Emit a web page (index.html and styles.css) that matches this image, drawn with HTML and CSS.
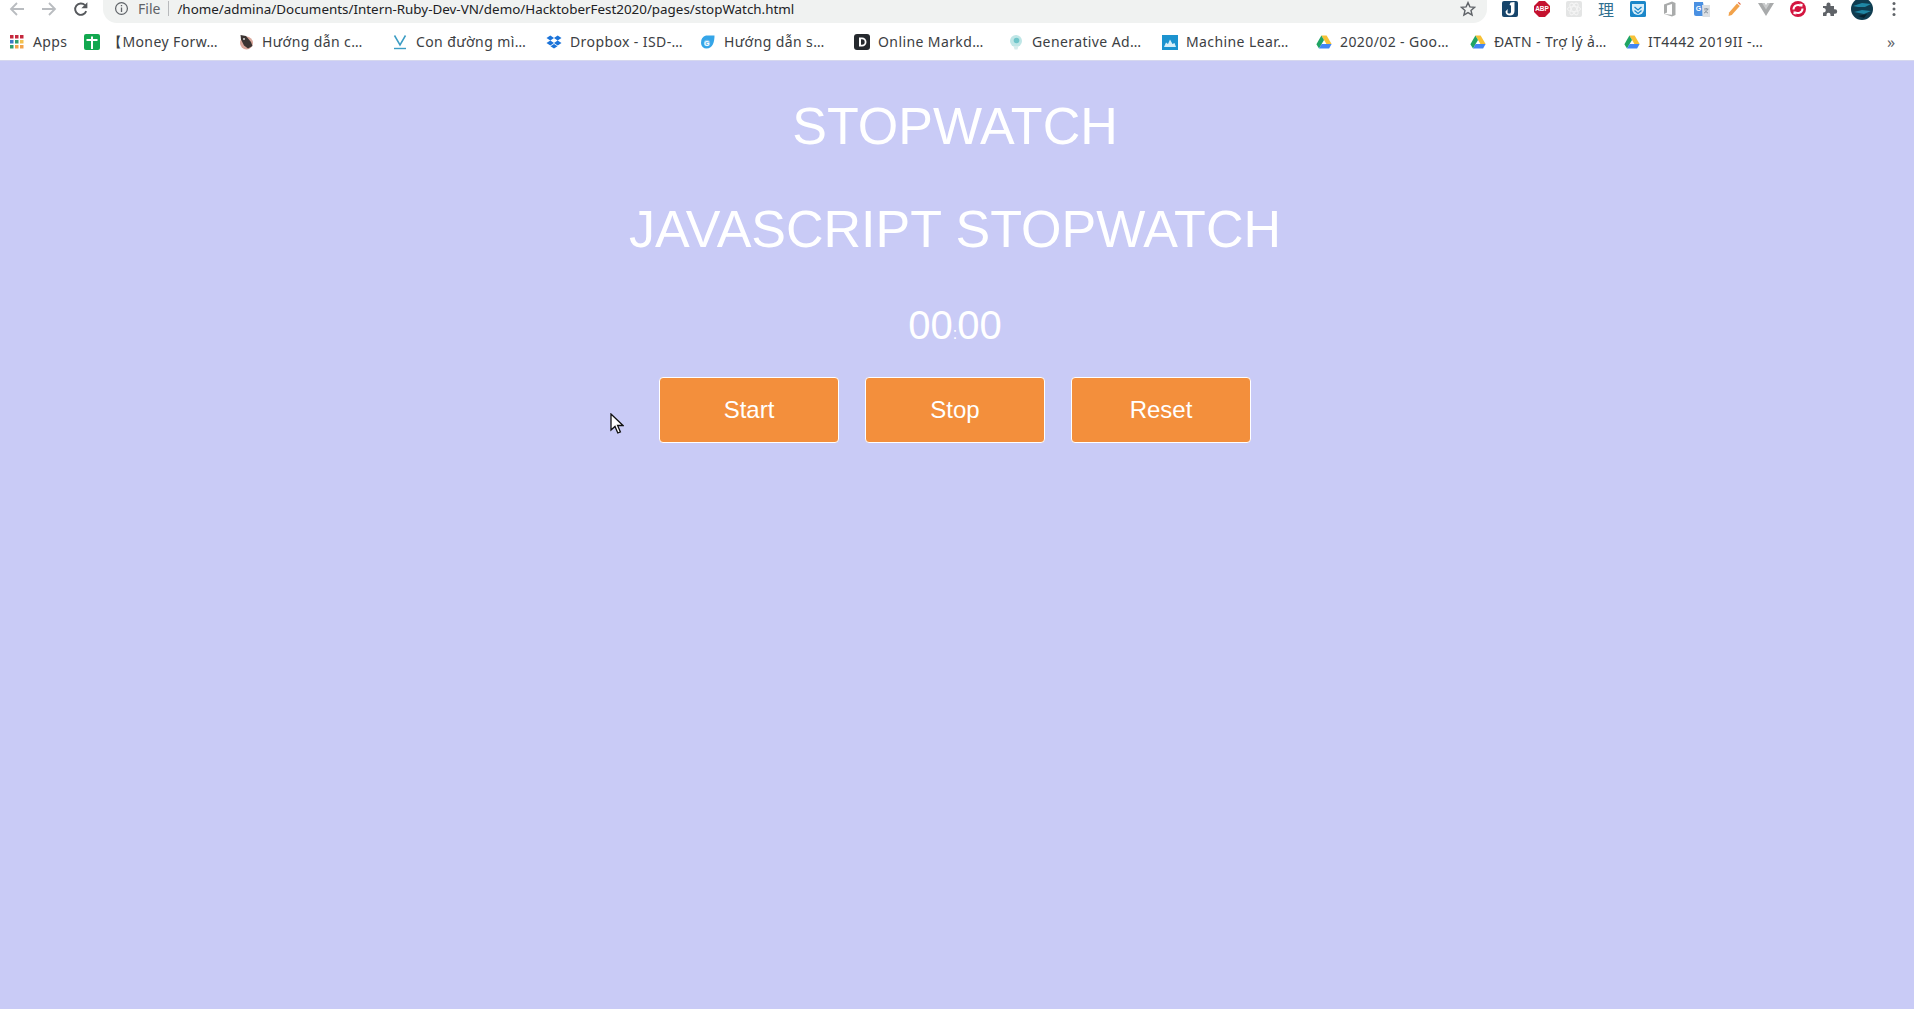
FILE: index.html
```html
<!DOCTYPE html>
<html lang="en">
<head>
  <meta charset="UTF-8" />
  <title>Stopwatch</title>
  <link rel="stylesheet" href="styles.css">
</head>
<body>
  <svg class="defs" width="0" height="0">
    <symbol id="drive" viewBox="0 0 16 16">
      <path d="M5.4 1.5h5.2l5 8.6h-5.2z" fill="#f7c136"/>
      <path d="M5.4 1.5L.4 10.2l2.6 4.4 5-8.7z" fill="#1fa463"/>
      <path d="M3 14.6h10.1l2.5-4.5H5.6z" fill="#4285f4"/>
    </symbol>
  </svg>

  <header class="browser">
    <div class="toolbar">
      <div class="nav">
        <svg class="nav-icon" viewBox="0 0 16 16"><path d="M15 8H2M8 2L2 8l6 6" fill="none" stroke="#b9bcc0" stroke-width="1.8"/></svg>
        <svg class="nav-icon" viewBox="0 0 16 16"><path d="M1 8h13M8 2l6 6-6 6" fill="none" stroke="#b9bcc0" stroke-width="1.8"/></svg>
        <svg class="nav-icon" viewBox="0 0 16 16"><path d="M13.2 10.2A5.7 5.7 0 1 1 12 4.2" fill="none" stroke="#55585c" stroke-width="1.9"/><path d="M14.4 1.2v6h-6z" fill="#55585c"/></svg>
      </div>
      <div class="address">
        <svg class="info" viewBox="0 0 16 16"><circle cx="8" cy="8" r="6.3" fill="none" stroke="#5f6368" stroke-width="1.3"/><path d="M7.3 7h1.4v4.6H7.3zM7.3 4.3h1.4v1.4H7.3z" fill="#5f6368"/></svg>
        <span class="scheme">File</span>
        <span class="divider"></span>
        <span class="url">/home/admina/Documents/Intern-Ruby-Dev-VN/demo/HacktoberFest2020/pages/stopWatch.html</span>
        <svg class="star" viewBox="0 0 16 16"><path d="M8 1.6l1.9 4.3 4.7.4-3.6 3.1 1.1 4.6L8 11.6l-4.1 2.4L5 9.4 1.4 6.3l4.7-.4z" fill="none" stroke="#5f6368" stroke-width="1.4"/></svg>
      </div>
      <div class="extensions">
        <svg class="ext" viewBox="0 0 16 16"><rect width="16" height="16" rx="2" fill="#17456b"/><path d="M8.500 1.500L12.500 1v9c0 3-2 4.500-4.500 4.500-2.500 0-4.500-1.500-4.500-4l2.200-2.500-.2 3.500c.5 1.500 3.500 1.500 3.500-.8V4.500L7.500 4z" fill="#fff"/></svg>
        <svg class="ext" viewBox="0 0 16 16"><path d="M5 0h6l5 5v6l-5 5H5l-5-5V5z" fill="#c4122f"/><text x="8" y="10.300" class="abp">ABP</text></svg>
        <svg class="ext" viewBox="0 0 16 16"><rect width="16" height="16" rx="2" fill="#e4e5e5"/><g fill="none" stroke="#f5f5f5" stroke-width="1"><ellipse cx="8" cy="8" rx="6.500" ry="2.600"/><ellipse cx="8" cy="8" rx="6.500" ry="2.600" transform="rotate(60 8 8)"/><ellipse cx="8" cy="8" rx="6.500" ry="2.600" transform="rotate(120 8 8)"/></g></svg>
        <span class="ext kanji">理</span>
        <svg class="ext" viewBox="0 0 16 16"><rect width="16" height="16" rx="1.500" fill="#1b87c9"/><path d="M2 3h12v5a6 6 0 0 1-12 0z" fill="#d8eef9"/><path d="M4.500 6L8 9l3.500-3M4.500 9.500L8 12.500l3.500-3" fill="none" stroke="#1b87c9" stroke-width="1.300"/></svg>
        <svg class="ext" viewBox="0 0 16 16"><path d="M2 3.500L10 .500l3.500 1.500v12L10 15.500l-8-2.500 8 .8V3L5 4.500v7L2 13z" fill="#a9abab"/></svg>
        <svg class="ext" viewBox="0 0 16 16"><path d="M0 1h9l2 14H2a2 2 0 0 1-2-2z" fill="#4a90e2"/><path d="M8 4h8v12H8.500z" fill="#dcdfe3"/><text x="4.500" y="9.500" class="gt">G</text><path d="M10 8h4.500M12.200 7v1M13.500 8c-.5 2-2 3.500-3.500 4M11 9.500c.5 1 1.800 2 3 2.500" fill="none" stroke="#7b8794" stroke-width=".9"/></svg>
        <svg class="ext" viewBox="0 0 16 16"><path d="M2.500 15l.6-3.600L11 2.500l2.800 2.500-8 8.900z" fill="#f2a24a"/><path d="M11.800 1.700l1-.7 2 1.900-.6 1.100z" fill="#e5683f"/></svg>
        <svg class="ext" viewBox="0 0 16 16"><path d="M0 2h5.200L8 6.500 10.800 2H16L8 15z" fill="#a8aaab"/><path d="M4 2h2.800L8 4.200 9.200 2H12L8 8.500z" fill="#c9cbcc"/></svg>
        <svg class="ext" viewBox="0 0 16 16"><circle cx="8" cy="8" r="8" fill="#d3153f"/><path d="M3.500 8.500a4.500 4.500 0 0 1 7.500-3.400M12.500 7.500a4.500 4.500 0 0 1-7.500 3.400" fill="none" stroke="#fff" stroke-width="2"/><path d="M9.500 2.500l3.200.5-.6 3.600zM6.500 13.500l-3.200-.5.600-3.600z" fill="#fff"/></svg>
        <svg class="ext" viewBox="0 0 16 16"><path d="M1 5h3.500V3.500a2 2 0 0 1 4 0V5H12v3.300h1a2.200 2.200 0 0 1 0 4.400h-1V15H8.500v-1.200a2 2 0 0 0-4 0V15H1v-3.500h1a2.300 2.300 0 0 0 0-4.500H1z" fill="#5f6368"/></svg>
        <svg class="avatar" viewBox="0 0 22 22"><circle cx="11" cy="11" r="11" fill="#0f3c50"/><path d="M2 8l9-3 9 1-6 3-7 0zM3 14l8-2 9 1-7 3z" fill="#1f87a5"/><path d="M7 18l9-2-3 4z" fill="#06202c"/></svg>
        <svg class="dots" viewBox="0 0 4 16"><circle cx="2" cy="2.500" r="1.500"/><circle cx="2" cy="8" r="1.500"/><circle cx="2" cy="13.500" r="1.500"/></svg>
      </div>
    </div>

    <nav class="bookmarks">
      <a class="apps">
        <svg class="fav" viewBox="0 0 16 16">
          <g fill="#c5283d"><rect x="1" y="1" width="3.500" height="3.500"/><rect x="6" y="1" width="3.500" height="3.500"/><rect x="11" y="1" width="3.500" height="3.500"/></g>
          <rect x="1" y="6" width="3.500" height="3.500" fill="#3a78c9"/><rect x="6" y="6" width="3.500" height="3.500" fill="#2f9e6e"/><rect x="11" y="6" width="3.500" height="3.500" fill="#f2c14e"/>
          <rect x="1" y="11" width="3.500" height="3.500" fill="#2f9e6e"/><rect x="6" y="11" width="3.500" height="3.500" fill="#f2a24a"/><rect x="11" y="11" width="3.500" height="3.500" fill="#f2a24a"/>
        </svg>
        <span>Apps</span>
      </a>
      <a class="mark">
        <svg class="fav" viewBox="0 0 16 16"><rect width="16" height="16" rx="2" fill="#12a84f"/><path d="M2.500 5h4.500V2.500h2V5h4.500v2H9v8H7V7H2.500z" fill="#fff"/></svg>
        <span>【Money Forw…</span>
      </a>
      <a class="mark">
        <svg class="fav" viewBox="0 0 16 16"><circle cx="8.500" cy="9" r="6.500" fill="#d9a79b"/><path d="M2.500 1l5.500 1 5 6 1.500 4-4.500 2.500-4-3-3-6z" fill="#3d3533"/><circle cx="6" cy="5" r="1" fill="#ddd"/></svg>
        <span>Hướng dẫn c…</span>
      </a>
      <a class="mark">
        <svg class="fav" viewBox="0 0 16 16"><path d="M2.500 1.500L8 11l5.500-9.500" fill="none" stroke="#3b9cc4" stroke-width="1.500"/><path d="M2 14.500h12" stroke="#3b9cc4" stroke-width="1.400"/></svg>
        <span>Con đường mì…</span>
      </a>
      <a class="mark">
        <svg class="fav" viewBox="0 0 16 16"><path d="M4.300 1.500L8 4 4.300 6.500.5 4zM11.700 1.500L15.500 4l-3.800 2.500L8 4zM4.300 6.500L8 9l-3.700 2.500L.5 9zM11.700 6.500L15.500 9l-3.800 2.500L8 9zM4.500 12.300L8 10l3.500 2.300L8 14.600z" fill="#1a73d9"/></svg>
        <span>Dropbox - ISD-…</span>
      </a>
      <a class="mark">
        <svg class="fav" viewBox="0 0 16 16"><path d="M6 1.500h8.500c0 6-1.500 13-8 13A5.500 5.500 0 0 1 1 9a7 7 0 0 1 5-7.500z" fill="#35a5e8"/><circle cx="7" cy="9" r="3.200" fill="#fff" opacity=".3"/><text x="7" y="11.500" class="gt">G</text></svg>
        <span>Hướng dẫn s…</span>
      </a>
      <a class="mark">
        <svg class="fav" viewBox="0 0 16 16"><rect width="16" height="16" rx="3" fill="#25292e"/><path d="M5 3.500h3a4.500 4.500 0 0 1 0 9H5zM7 5.300v5.400h1a2.700 2.700 0 0 0 0-5.400z" fill="#fff" fill-rule="evenodd"/></svg>
        <span>Online Markd…</span>
      </a>
      <a class="mark">
        <svg class="fav" viewBox="0 0 16 16"><circle cx="8" cy="7" r="6" fill="#bfe6e6"/><path d="M5.500 12h5l-1 3.500h-3z" fill="#d5ecec"/><circle cx="8.500" cy="6.500" r="2.800" fill="#6fc5c9"/></svg>
        <span>Generative Ad…</span>
      </a>
      <a class="mark">
        <svg class="fav" viewBox="0 0 16 16"><rect y="1" width="16" height="15" fill="#1c93cf"/><path d="M2 13h12l-1.500-4-2 1L8 5.500 6 10 4 8.500z" fill="#d7eff9"/></svg>
        <span>Machine Lear…</span>
      </a>
      <a class="mark"><svg class="fav"><use href="#drive"/></svg><span>2020/02 - Goo…</span></a>
      <a class="mark"><svg class="fav"><use href="#drive"/></svg><span>ĐATN - Trợ lý ả…</span></a>
      <a class="mark"><svg class="fav"><use href="#drive"/></svg><span>IT4442 2019II -…</span></a>
      <span class="more">»</span>
    </nav>
  </header>

  <main class="stopwatch">
    <h1>STOPWATCH</h1>
    <h1 class="sub">JAVASCRIPT STOPWATCH</h1>
    <p class="time"><span>00</span>:<span>00</span></p>
    <div class="buttons">
      <button>Start</button>
      <button>Stop</button>
      <button>Reset</button>
    </div>
  </main>

  <svg class="cursor" viewBox="0 0 14 22"><path d="M1 1v16l4-3.600 2.800 6.600 2.600-1.100-2.800-6.400H13z" fill="#fff" stroke="#111" stroke-width="1.300"/></svg>
</body>
</html>
```
FILE: styles.css
```css
* {
  box-sizing: border-box;
}

html, body {
  height: 100%;
}

body {
  margin: 0;
  display: flex;
  flex-direction: column;
  overflow: hidden;
  background-color: #c9cbf6;
  font-family: "Liberation Sans", Arial, sans-serif;
}

.defs {
  position: absolute;
}

/* browser chrome */
.browser {
  background-color: #fff;
  font-family: "Noto Sans", "Open Sans", sans-serif;
  color: #3c4043;
}

.toolbar {
  display: flex;
  height: 23px;
}

.nav {
  display: flex;
  align-items: center;
  gap: 16px;
  width: 103px;
  padding: 0 0 5px 9px;
}

.nav-icon {
  width: 16px;
  height: 16px;
}

.address {
  display: flex;
  align-items: center;
  width: 1384px;
  padding: 0 11px 6px 11px;
  background-color: #f0f2f1;
  border-radius: 0 0 14px 14px;
}

.info {
  width: 15px;
  height: 15px;
}

.scheme {
  margin-left: 9px;
  font-size: 14px;
  color: #5f6368;
}

.divider {
  width: 1px;
  height: 15px;
  margin: 0 8px;
  background-color: #b8babc;
}

.url {
  flex: 1;
  font-size: 13.4px;
  color: #202124;
  white-space: nowrap;
}

.star {
  width: 16px;
  height: 16px;
}

.extensions {
  display: flex;
  align-items: center;
  gap: 16px;
  padding: 0 0 6px 15px;
}

.ext {
  flex: none;
  width: 16px;
  height: 16px;
}

.kanji {
  font-family: "Noto Sans CJK SC", sans-serif;
  font-size: 16px;
  line-height: 16px;
  color: #2f6f8f;
}

.abp {
  font: bold 6.5px "Liberation Sans", sans-serif;
  fill: #fff;
  text-anchor: middle;
}

.gt {
  font: bold 7px "Liberation Sans", sans-serif;
  fill: #fff;
  text-anchor: middle;
}

.avatar {
  flex: none;
  width: 22px;
  height: 22px;
  margin-left: -3px;
}

.dots {
  flex: none;
  width: 4px;
  height: 16px;
  margin-left: 3px;
  fill: #5f6368;
}

.bookmarks {
  display: flex;
  align-items: center;
  height: 38px;
  padding-left: 9px;
  border-bottom: 1px solid #d6d8ee;
  font-size: 14px;
  letter-spacing: 0.4px;
  white-space: nowrap;
}

.bookmarks a {
  display: flex;
  align-items: center;
  gap: 8px;
}

.fav {
  flex: none;
  width: 16px;
  height: 16px;
}

.apps {
  width: 75px;
}

.mark {
  width: 154px;
}

.more {
  margin-left: 109px;
  font-size: 16px;
  color: #5f6368;
}

/* stopwatch page */
.stopwatch {
  padding: 35px 4px 0 0;
  color: #fff;
  text-align: center;
}

h1 {
  margin: 0;
  font-size: 52px;
  font-weight: normal;
  line-height: 60px;
}

.sub {
  margin-top: 43px;
}

.time {
  margin: 43px 0 0;
  font-size: 16px;
  line-height: 46px;
}

.time span {
  font-size: 40px;
}

.buttons {
  display: flex;
  justify-content: center;
  gap: 26px;
  margin-top: 20px;
}

button {
  width: 180px;
  height: 66px;
  border: 1px solid #fff;
  border-radius: 4px;
  background-color: #f38f3c;
  color: #fff;
  font-family: "Liberation Sans", Arial, sans-serif;
  font-size: 24px;
}

.cursor {
  position: absolute;
  left: 610px;
  top: 413px;
  width: 14px;
  height: 22px;
}
```
